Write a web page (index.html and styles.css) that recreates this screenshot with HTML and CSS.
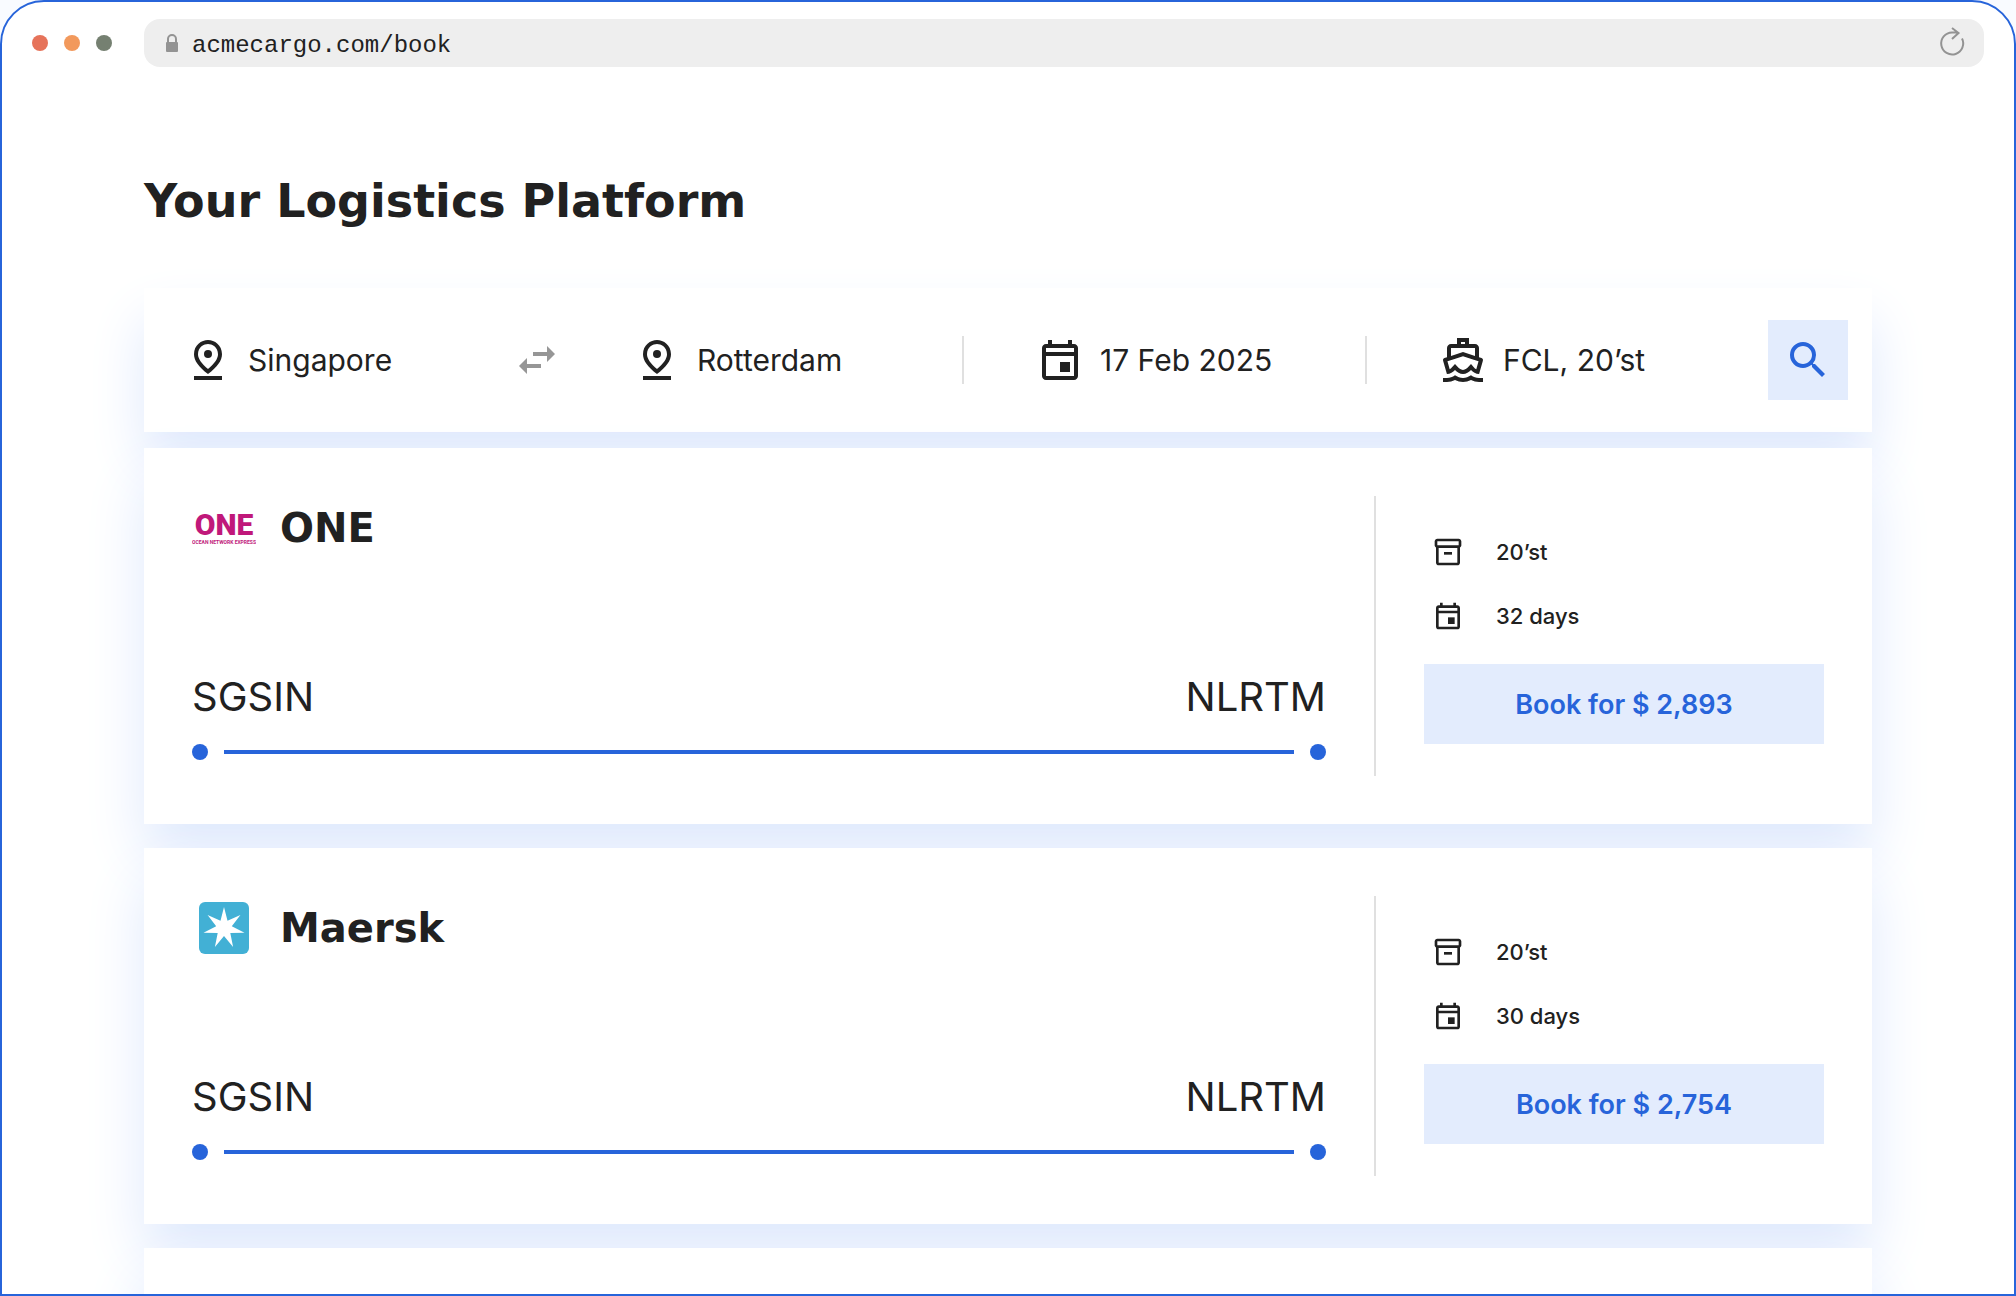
FILE: index.html
```html
<!DOCTYPE html>
<html lang="en">
<head>
    <meta charset="UTF-8">
    <meta name="viewport" content="width=device-width, initial-scale=1.0">
    <title>Acme Cargo - Book</title>
    <link rel="stylesheet" href="styles.css">
</head>
<body>
    <!-- Shared icons -->
    <svg class="sprite" aria-hidden="true">
        <symbol id="icon-pin" viewBox="0 0 24 24">
            <path d="M12 4c1.93 0 5 1.4 5 5.15 0 2.16-1.72 4.67-5 7.32-3.28-2.65-5-5.17-5-7.32C7 5.4 10.07 4 12 4m0-2C8.73 2 5 4.46 5 9.15c0 3.12 2.33 6.41 7 9.85 4.67-3.44 7-6.73 7-9.85C19 4.46 15.27 2 12 2z"/>
            <circle cx="12" cy="9" r="2"/>
            <path d="M5 20h14v2H5z"/>
        </symbol>
        <symbol id="icon-calendar" viewBox="0 0 24 24">
            <path d="M19 4h-1V2h-2v2H8V2H6v2H5c-1.1 0-2 .9-2 2v14c0 1.1.9 2 2 2h14c1.1 0 2-.9 2-2V6c0-1.1-.9-2-2-2zm0 16H5V10h14v10zm0-12H5V6h14v2z"/>
            <path d="M12 13h5v5h-5z"/>
        </symbol>
        <symbol id="icon-box" viewBox="0 0 24 24">
            <path d="M20 2H4c-1 0-2 .9-2 2v3.01c0 .72.43 1.34 1 1.69V20c0 1.1 1.1 2 2 2h14c.9 0 2-.9 2-2V8.7c.57-.35 1-.97 1-1.69V4c0-1.1-1-2-2-2zm-1 18H5V9h14v11zm1-13H4V4h16v3z"/>
            <path d="M9 12h6v2H9z"/>
        </symbol>
    </svg>

    <div class="browser">
        <header class="toolbar">
            <div class="dots">
                <span class="dot dot-close"></span>
                <span class="dot dot-minimize"></span>
                <span class="dot dot-zoom"></span>
            </div>
            <div class="address">
                <svg class="lock" viewBox="0 0 16 24" aria-hidden="true">
                    <path d="M4 12V8a4 4 0 0 1 8 0v4" fill="none" stroke="currentColor" stroke-width="2"/>
                    <rect x="2" y="11" width="12" height="10" rx="1"/>
                </svg>
                <input class="url" type="text" value="acmecargo.com/book" aria-label="Address">
                <button class="reload" type="button" aria-label="Reload">
                    <svg viewBox="0 0 32 32" aria-hidden="true">
                        <path d="M26 11.5A11 11 0 1 1 16 5.5h6M16 1l6.500 5-6.500 6"/>
                    </svg>
                </button>
            </div>
        </header>

        <main class="page">
            <h1>Your Logistics Platform</h1>

            <form class="search">
                <div class="field">
                    <label for="from"><svg class="icon" role="img" aria-label="From"><use href="#icon-pin"/></svg></label>
                    <input type="text" id="from" value="Singapore">
                </div>
                <button class="swap" type="button" aria-label="Swap ports">
                    <svg class="icon" viewBox="0 0 24 24" aria-hidden="true">
                        <path d="M6.990 11L3 15l3.990 4v-3H14v-2H6.990v-3zM21 9l-3.990-4v3H10v2h7.010v3L21 9z"/>
                    </svg>
                </button>
                <div class="field">
                    <label for="to"><svg class="icon" role="img" aria-label="To"><use href="#icon-pin"/></svg></label>
                    <input type="text" id="to" value="Rotterdam">
                </div>
                <span class="separator"></span>
                <div class="field">
                    <label for="date"><svg class="icon" role="img" aria-label="Date"><use href="#icon-calendar"/></svg></label>
                    <input type="text" id="date" value="17 Feb 2025">
                </div>
                <span class="separator"></span>
                <div class="field">
                    <label for="container">
                        <svg class="icon" viewBox="0 0 24 24" role="img" aria-label="Container">
                            <path d="M13 3v1h-2V3h2zm-1 7.110l5.380 1.770 2.390.780-1.120 3.970c-.54-.3-.94-.71-1.140-.94L16 13.960l-1.510 1.720c-.34.4-1.280 1.320-2.490 1.320s-2.150-.92-2.490-1.320L8 13.960l-1.510 1.720c-.2.230-.6.630-1.140.930l-1.130-3.960 2.400-.79L12 10.110M15 1H9v3H6c-1.100 0-2 .9-2 2v4.620l-1.290.42c-.26.08-.48.26-.6.5s-.15.52-.06.78L3.950 19H4c1.600 0 3.020-.88 4-2 .98 1.120 2.400 2 4 2s3.020-.88 4-2c.98 1.120 2.400 2 4 2h.05l1.890-6.680c.08-.26.06-.54-.06-.78s-.34-.42-.6-.5L20 10.620V6c0-1.100-.9-2-2-2h-3V1zM6 9.970V6h12v3.970L12 8 6 9.970z"/>
                            <path d="M20 21c-1.390 0-2.780-.47-4-1.320-2.440 1.710-5.560 1.710-8 0C6.780 20.530 5.390 21 4 21H2v2h2c1.380 0 2.740-.35 4-.99 2.520 1.290 5.480 1.290 8 0 1.260.65 2.620.99 4 .99h2v-2h-2z"/>
                        </svg>
                    </label>
                    <select id="container">
                        <option>FCL, 20’st</option>
                    </select>
                </div>
                <button class="submit" type="submit" aria-label="Search">
                    <svg class="icon" viewBox="0 0 24 24" aria-hidden="true">
                        <path d="M15.500 14h-.79l-.28-.27A6.471 6.471 0 0 0 16 9.500 6.500 6.500 0 1 0 9.500 16c1.610 0 3.090-.59 4.230-1.570l.27.28v.79l5 4.990L20.490 19l-4.990-5zm-6 0C7.010 14 5 11.990 5 9.500S7.010 5 9.500 5 14 7.010 14 9.500 11.990 14 9.500 14z"/>
                    </svg>
                </button>
            </form>

            <div class="offers">
                <article class="offer">
                    <div class="trip">
                        <div class="carrier">
                            <svg class="logo logo-one" viewBox="0 0 64 64" role="img" aria-label="Ocean Network Express">
                                <text class="logo-word" x="32" y="39">ONE</text>
                                <text class="logo-tagline" x="32" y="48">OCEAN NETWORK EXPRESS</text>
                            </svg>
                            <h2>ONE</h2>
                        </div>
                        <div class="route">
                            <div class="ports"><span>SGSIN</span><span>NLRTM</span></div>
                            <div class="track"><span class="stop"></span><span class="line"></span><span class="stop"></span></div>
                        </div>
                    </div>
                    <div class="booking">
                        <ul class="details">
                            <li><svg class="icon-small" aria-hidden="true"><use href="#icon-box"/></svg>20’st</li>
                            <li><svg class="icon-small" aria-hidden="true"><use href="#icon-calendar"/></svg>32 days</li>
                        </ul>
                        <button class="book" type="button">Book for $ 2,893</button>
                    </div>
                </article>

                <article class="offer">
                    <div class="trip">
                        <div class="carrier">
                            <svg class="logo" viewBox="-7 -6 64 64" role="img" aria-label="Maersk">
                                <rect width="50" height="52" rx="6" fill="#42b0d5"/>
                                <path fill="#fff" d="M25 5l3.500 13.800 12.900-5.900-8.600 11.300 12.700 6.500-14.200.3 2.800 13.900L25 34l-9.100 10.900 2.800-13.900-14.200-.3 12.700-6.500-8.600-11.300 12.900 5.900z"/>
                            </svg>
                            <h2>Maersk</h2>
                        </div>
                        <div class="route">
                            <div class="ports"><span>SGSIN</span><span>NLRTM</span></div>
                            <div class="track"><span class="stop"></span><span class="line"></span><span class="stop"></span></div>
                        </div>
                    </div>
                    <div class="booking">
                        <ul class="details">
                            <li><svg class="icon-small" aria-hidden="true"><use href="#icon-box"/></svg>20’st</li>
                            <li><svg class="icon-small" aria-hidden="true"><use href="#icon-calendar"/></svg>30 days</li>
                        </ul>
                        <button class="book" type="button">Book for $ 2,754</button>
                    </div>
                </article>

                <article class="offer"></article>
            </div>
        </main>
    </div>
</body>
</html>
```
FILE: styles.css
```css
* {
    box-sizing: border-box;
}

body {
    margin: 0;
    background: #f9fbff;
    color: #212121;
    font-family: Inter, 'Liberation Sans', sans-serif;
}

button, input, select {
    margin: 0;
    padding: 0;
    border: none;
    background: none;
    color: inherit;
    font: inherit;
}

button {
    cursor: pointer;
}

svg {
    display: block;
    fill: currentColor;
}

.sprite {
    display: none;
}

.browser {
    height: 100vh;
    overflow: hidden;
    border: 2px solid #2764da;
    border-radius: 44px 44px 0 0;
    background: #fff;
}

/* Browser toolbar */
.toolbar {
    display: flex;
    align-items: center;
    gap: 32px;
    padding: 17px 30px 0;
}
.dots {
    display: flex;
    gap: 16px;
}
.dot {
    width: 16px;
    height: 16px;
    border-radius: 50%;
}
.dot-close {
    background: #e6735a;
}
.dot-minimize {
    background: #f2995c;
}
.dot-zoom {
    background: #758071;
}
.address {
    flex: 1;
    display: flex;
    align-items: center;
    gap: 12px;
    height: 48px;
    padding: 0 16px 0 20px;
    border-radius: 16px;
    background: #eee;
}
.lock {
    width: 16px;
    height: 24px;
    color: #939393;
}
.url {
    flex: 1;
    min-width: 0;
    padding-top: 4px;
    font-family: 'Liberation Mono', monospace;
    font-size: 24px;
}
.reload svg {
    width: 32px;
    height: 32px;
    fill: none;
    stroke: #939393;
    stroke-width: 2;
}

/* Page */
.page {
    padding: 104px 142px 0;
}
h1, h2 {
    margin: 0;
    font-family: 'DejaVu Sans', sans-serif;
    font-weight: 700;
}
h1 {
    margin-bottom: 57px;
    font-size: 46px;
    line-height: 60px;
}
.search, .offer {
    background: #fff;
    box-shadow: 0 32px 56px #dfe9fd;
}
.search {
    display: flex;
    align-items: center;
    gap: 72px;
    height: 144px;
    padding: 0 24px 0 40px;
    font-size: 30px;
}
.field {
    flex: 1;
    min-width: 0;
    display: flex;
    align-items: center;
    gap: 16px;
}
.field input, .field select {
    flex: 1;
    width: 100%;
    min-width: 0;
    appearance: none;
}
.icon {
    width: 48px;
    height: 48px;
}
.swap {
    color: #969696;
}
.separator {
    width: 2px;
    height: 48px;
    background: #e0e0e0;
}
.submit {
    display: grid;
    place-items: center;
    width: 80px;
    height: 80px;
    background: #e3ecfd;
    color: #2764da;
}

/* Offers */
.offers {
    display: grid;
    gap: 24px;
    margin-top: 16px;
}
.offer {
    display: flex;
    min-height: 376px;
    padding: 48px;
}
.trip {
    flex: 1;
    display: flex;
    flex-direction: column;
    justify-content: space-between;
    padding: 0 48px 16px 0;
}
.carrier {
    display: flex;
    align-items: center;
    gap: 24px;
}
.logo {
    width: 64px;
    height: 64px;
}
.logo-one {
    fill: #c0187a;
    font-family: Roboto, sans-serif;
    text-anchor: middle;
}
.logo-word {
    font-size: 30px;
    font-weight: 900;
}
.logo-tagline {
    font-size: 5px;
    font-weight: 700;
}
h2 {
    font-size: 40px;
    line-height: 48px;
}
.ports {
    display: flex;
    justify-content: space-between;
    margin-bottom: 23px;
    font-size: 40px;
    line-height: 48px;
}
.track {
    display: flex;
    align-items: center;
    gap: 16px;
}
.stop {
    width: 16px;
    height: 16px;
    border-radius: 50%;
    background: #2764da;
}
.line {
    flex: 1;
    height: 4px;
    background: #2764da;
}
.booking {
    width: 450px;
    padding: 24px 0 0 48px;
    border-left: 2px solid #e0e0e0;
}
.details {
    margin: 0 0 16px;
    padding: 0 8px;
    list-style: none;
    font-size: 22px;
    font-weight: 500;
}
.details li {
    display: flex;
    align-items: center;
    gap: 32px;
    height: 64px;
}
.icon-small {
    width: 32px;
    height: 32px;
}
.book {
    width: 100%;
    height: 80px;
    background: #e3ecfd;
    color: #2764da;
    font-size: 27px;
    font-weight: 600;
}
```
